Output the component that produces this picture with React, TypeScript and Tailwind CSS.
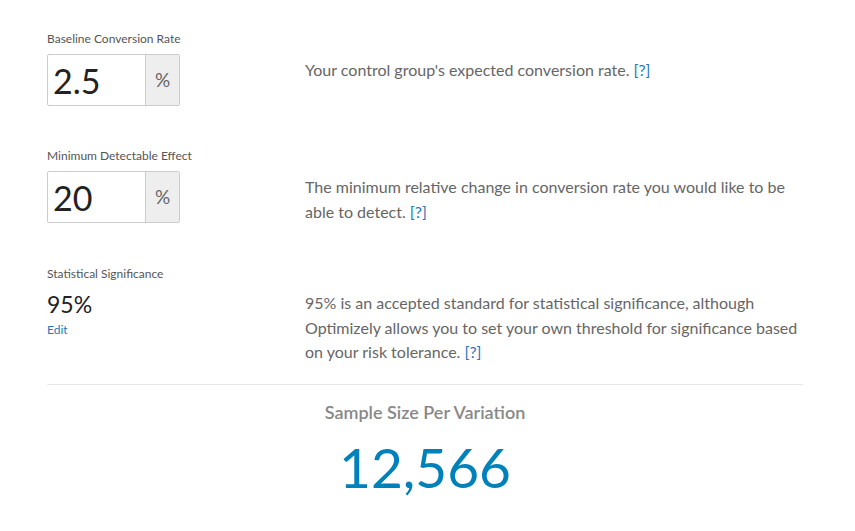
import React from "react"

interface PercentInputProps {
  label: string
  value: string
  children: React.ReactNode
}

const Help: React.FC = () => <span className="text-[#1f78b8]">[?]</span>

const PercentField: React.FC<PercentInputProps> = ({ label, value, children }) => {
  return (
    <div className="mb-[42px]">
      <div className="h-4 text-[12px] leading-4 text-[#555]">{label}</div>
      <div className="mt-[7px] flex">
        <div className="w-[258px] shrink-0">
          <div className="flex h-[52px] w-[133px] rounded-[2px] border border-[#ccc]">
            <div className="flex flex-1 items-center pl-[5px] text-[34px] text-[#222]">{value}</div>
            <div className="flex w-[34px] items-center justify-center border-l border-[#ccc] bg-[#eee] text-[19px] text-[#666]">
              %
            </div>
          </div>
        </div>
        <p className="mt-[4px] w-[498px] text-[16px] leading-[24.5px] text-[#666]">{children}</p>
      </div>
    </div>
  )
}

const App: React.FC = () => {
  return (
    <div className="min-h-[531px] bg-white font-['Lato',sans-serif]">
      <div className="ml-[47px] w-[756px] pt-[31px]">
        <PercentField label="Baseline Conversion Rate" value="2.5">
          Your control group's expected conversion rate. <Help />
        </PercentField>

        <PercentField label="Minimum Detectable Effect" value="20">
          The minimum relative change in conversion rate you would like to be able to detect. <Help />
        </PercentField>

        {/* Significance */}
        <div>
          <div className="h-4 text-[12px] leading-4 text-[#555]">Statistical Significance</div>
          <div className="mt-[7px] flex">
            <div className="w-[258px] shrink-0">
              <div className="mt-[1px] text-[23px] leading-7 text-[#222]">95%</div>
              <div className="mt-1 text-[12px] leading-4 text-[#1f78b8]">Edit</div>
            </div>
            <p className="mt-[2px] w-[498px] text-[16px] leading-[24.5px] text-[#666]">
              95% is an accepted standard for statistical significance, although Optimizely allows you to set
              your own threshold for significance based on your risk tolerance. <Help />
            </p>
          </div>
        </div>

        <div className="mt-[19px] border-t border-[#e6e6e6]" />

        {/* Result */}
        <div className="text-center">
          <div className="mt-[15px] text-[18px] font-semibold leading-6 text-[#888]">Sample Size Per Variation</div>
          <div className="mt-[13px] text-[55px] leading-[60px] text-[#0081ba]">12,566</div>
        </div>
      </div>
    </div>
  )
}

export default App
